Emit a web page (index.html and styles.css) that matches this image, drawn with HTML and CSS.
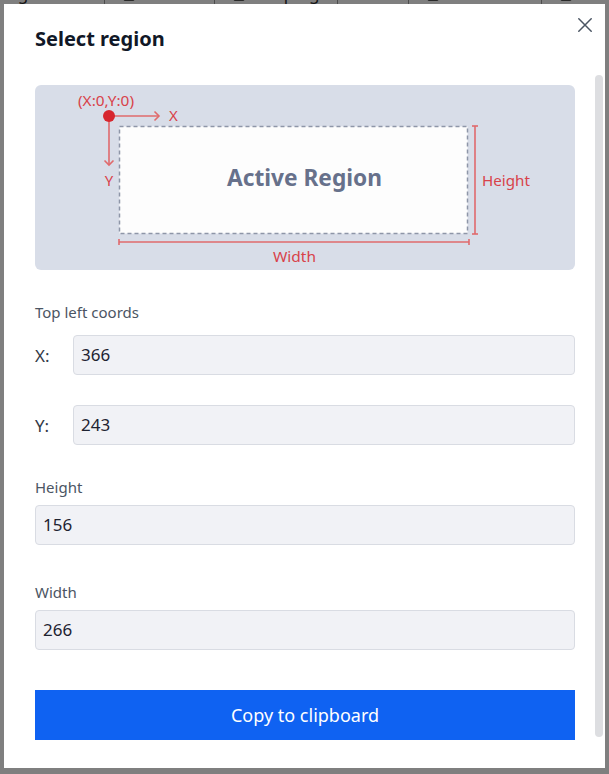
FILE: index.html
```html
<!DOCTYPE html>
<html lang="en">
<head>
<meta charset="utf-8">
<title>Select region</title>
<link rel="stylesheet" href="styles.css">
</head>
<body>
<div class="toolbar">
  <span class="tb-item tb-first">Unrecognised <span class="chev">⌄</span></span>
  <span class="tb-item"><span class="tb-icon"></span>Record</span>
  <span class="tb-item"><span class="tb-icon"></span>Scraping</span>
  <span class="tb-item">CDP</span>
  <span class="tb-item"><span class="tb-icon"></span>Selector <span class="chev">⌄</span></span>
  <span class="tb-item"><span class="tb-icon"></span>UI Auto</span>
</div>
<div class="overlay"></div>

<div class="modal">
  <button class="close" aria-label="Close">
    <svg width="14" height="14" viewBox="0 0 14 14"><path d="M0.8 0.8 L13.2 13.2 M13.2 0.8 L0.8 13.2" stroke="#4b5563" stroke-width="1.5" fill="none" stroke-linecap="round"/></svg>
  </button>
  <div class="scroll-thumb"></div>

  <h2 class="title">Select region</h2>

  <div class="body">
    <svg class="diagram" width="540" height="185" viewBox="0 0 540 185">
      <rect width="540" height="185" rx="6" fill="#d8dde8"/>
      <rect x="84.5" y="41.5" width="348" height="107" fill="#fdfdfd" stroke="#8e96a8" stroke-width="1.5" stroke-dasharray="4 3"/>
      <g stroke="#e06a6c" stroke-width="1.6" fill="none">
        <line x1="74" y1="31" x2="124" y2="31"/>
        <polyline points="119.5,26.5 124,31 119.5,35.5"/>
        <line x1="74" y1="31" x2="74" y2="80"/>
        <polyline points="69.5,75.5 74,80 78.5,75.5"/>
        <line x1="440" y1="41" x2="440" y2="149"/>
        <line x1="437" y1="41" x2="443" y2="41"/>
        <line x1="437" y1="149" x2="443" y2="149"/>
        <line x1="84" y1="157" x2="434" y2="157"/>
        <line x1="84" y1="154" x2="84" y2="160"/>
        <line x1="434" y1="154" x2="434" y2="160"/>
      </g>
      <circle cx="74" cy="31" r="6" fill="#d7262e"/>
      <text class="lbl-red lbl-sm" x="43" y="21" textLength="56" lengthAdjust="spacingAndGlyphs">(X:0,Y:0)</text>
      <text class="lbl-red" x="134" y="36">X</text>
      <text class="lbl-red" x="74" y="101" text-anchor="middle">Y</text>
      <text class="lbl-active" x="192" y="101" textLength="155" lengthAdjust="spacingAndGlyphs">Active Region</text>
      <text class="lbl-red" x="447" y="101" textLength="48" lengthAdjust="spacingAndGlyphs">Height</text>
      <text class="lbl-red" x="238" y="177" textLength="43" lengthAdjust="spacingAndGlyphs">Width</text>
    </svg>

    <div class="label label-top">Top left coords</div>
    <div class="coord-row">
      <span class="axis">X:</span>
      <div class="input">366</div>
    </div>
    <div class="coord-row coord-row-y">
      <span class="axis">Y:</span>
      <div class="input">243</div>
    </div>

    <div class="label label-height">Height</div>
    <div class="input">156</div>

    <div class="label label-width">Width</div>
    <div class="input">266</div>

    <button class="copy">Copy to clipboard</button>
  </div>
</div>
</body>
</html>
```

FILE: styles.css
```css
* { box-sizing: border-box; }

html, body {
  margin: 0;
  padding: 0;
  width: 609px;
  height: 774px;
  overflow: hidden;
  background: #ffffff;
  font-family: "Noto Sans", "Open Sans", sans-serif;
}

/* background toolbar (mostly hidden behind the modal) */
.toolbar {
  display: flex;
  align-items: flex-end;
  height: 24px;
  margin-top: -18px;
  font-size: 17px;
  line-height: 24px;
  color: #2b2b2b;
  white-space: nowrap;
}
.tb-item {
  display: flex;
  align-items: center;
  gap: 5px;
  padding: 0 18px 0 18px;
  border-left: 1px solid #9a9a9a;
}
.tb-first {
  border-left: none;
  padding-left: 0;
  margin-left: -40px;
}
.tb-icon {
  width: 12px;
  height: 14px;
  border: 1.5px solid #555;
  border-radius: 2px;
}
.chev { font-size: 12px; color: #666; }

.overlay {
  position: fixed;
  inset: 0;
  background: rgba(0, 0, 0, 0.5);
}

.modal {
  position: absolute;
  left: 4px;
  top: 4px;
  width: 601px;
  height: 764px;
  background: #ffffff;
  padding: 21px 30px 0 31px;
}

.close {
  position: absolute;
  top: 14px;
  right: 13px;
  width: 14px;
  height: 14px;
  padding: 0;
  border: none;
  background: none;
  display: block;
}
.close svg { display: block; }

.scroll-thumb {
  position: absolute;
  right: 2px;
  top: 71px;
  width: 8px;
  height: 662px;
  border-radius: 4px;
  background: #dddee1;
}

.title {
  margin: 0;
  font-size: 20px;
  line-height: 28px;
  font-weight: 700;
  color: #111827;
}

.body {
  display: flex;
  flex-direction: column;
  margin-top: 32px;
}

.diagram { display: block; }
.lbl-red {
  font-family: "Noto Sans", sans-serif;
  font-size: 15px;
  fill: #d8424a;
}
.lbl-sm { font-size: 14px; }
.lbl-active {
  font-family: "Noto Sans", sans-serif;
  font-size: 24px;
  font-weight: 700;
  fill: #67718b;
}

.label {
  font-size: 15px;
  line-height: 20px;
  color: #4b5563;
}
.label-top { margin-top: 32px; margin-bottom: 13px; }
.label-height { margin-top: 32px; margin-bottom: 8px; }
.label-width { margin-top: 37px; margin-bottom: 8px; }

.coord-row {
  display: flex;
  align-items: center;
}
.coord-row-y { margin-top: 30px; }

.axis {
  width: 38px;
  flex: none;
  font-size: 17px;
  color: #333a47;
}

.input {
  flex: 1;
  height: 40px;
  padding: 0 7px;
  border: 1px solid #d9dce3;
  border-radius: 4px;
  background: #f1f2f6;
  font-size: 17px;
  line-height: 38px;
  color: #1e2331;
}

.copy {
  margin-top: 40px;
  height: 50px;
  border: none;
  border-radius: 0;
  background: #0f62f2;
  color: #ffffff;
  font-family: "Noto Sans", "Open Sans", sans-serif;
  font-size: 18px;
  padding: 0;
}
```
